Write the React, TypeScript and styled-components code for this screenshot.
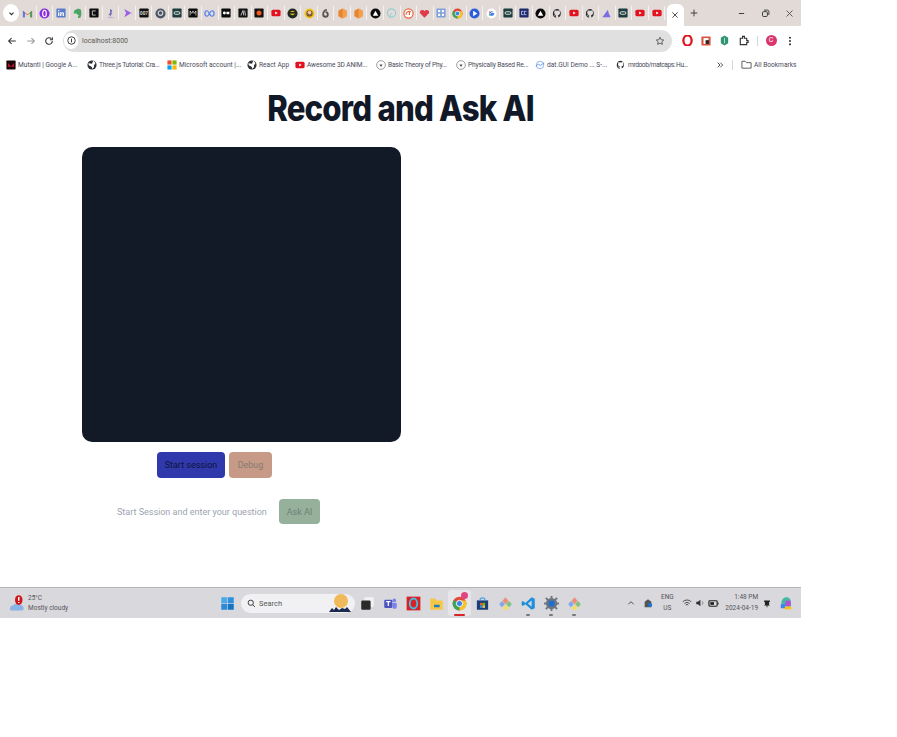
import React from "react";
import styled, { createGlobalStyle } from "styled-components";

const Global = createGlobalStyle`
  html, body { margin: 0; padding: 0; background: #fff; }
  body { font-family: Roboto, "Liberation Sans", sans-serif; }
`;

const Screen = styled.div`
  width: 801px;
  height: 618px;
  display: flex;
  flex-direction: column;
  overflow: hidden;
  background: #fff;
`;

const TabStrip = styled.div`
  height: 26px;
  background: #e1dad7;
  display: flex;
  align-items: center;
  padding-left: 3px;
`;
const TabMenu = styled.div`
  width: 16px;
  height: 18px;
  border-radius: 50%;
  background: #fff;
  display: flex;
  align-items: center;
  justify-content: center;
  margin-right: 1px;
  flex: none;
`;
const Tab = styled.div`
  width: 16.55px;
  height: 14px;
  display: flex;
  align-items: center;
  justify-content: center;
  border-right: 1px solid #f4f1f0;
  box-sizing: border-box;
  flex: none;
`;
const ActiveTab = styled.div`
  width: 17px;
  height: 22px;
  margin: 4px 0 0 1.5px;
  background: #fff;
  border-radius: 6px 6px 0 0;
  display: flex;
  align-items: center;
  justify-content: center;
  flex: none;
`;
const NewTab = styled.div`
  width: 20px;
  margin-left: 0.5px;
  display: flex;
  justify-content: center;
  flex: none;
`;
const WindowButtons = styled.div`
  margin-left: auto;
  display: flex;
  gap: 15px;
  padding-right: 7px;
  align-items: center;
`;

const Toolbar = styled.div`
  height: 29px;
  display: flex;
  align-items: center;
  padding-left: 7px;
  gap: 8.5px;
  background: #fff;
`;
const Omnibox = styled.div`
  width: 609px;
  height: 22px;
  border-radius: 11px;
  background: #e0e0e0;
  display: flex;
  align-items: center;
  margin-left: 0.5px;
  padding: 0 7px 0 1px;
  box-sizing: border-box;
  flex: none;
`;
const InfoBubble = styled.div`
  width: 14px;
  height: 16px;
  border-radius: 8px;
  background: #fff;
  display: flex;
  align-items: center;
  justify-content: center;
  margin-right: 4px;
`;
const Url = styled.span`
  font-size: 7px;
  color: #5f5a50;
  flex: 1;
`;
const ToolIcons = styled.div`
  display: flex;
  align-items: center;
  gap: 8px;
  margin-left: 1px;
`;
const Profile = styled.div`
  width: 11px;
  height: 11px;
  border-radius: 50%;
  background: #d9356f;
  color: #fff;
  font-size: 7px;
  line-height: 11px;
  text-align: center;
`;
const VSep = styled.div`
  width: 1px;
  height: 10px;
  background: #d8d8d8;
`;

const Bookmarks = styled.div`
  height: 19px;
  display: flex;
  align-items: center;
  padding-left: 6px;
  background: #fff;
`;
const Bookmark = styled.div<{ $w: number }>`
  display: flex;
  align-items: center;
  gap: 2px;
  width: ${(p) => p.$w}px;
  flex: none;
  svg {
    flex: none;
  }
`;
const BookmarkLabel = styled.span<{ $ls?: number }>`
  font-size: 6.6px;
  color: #4a4a5a;
  white-space: nowrap;
  letter-spacing: ${(p) => p.$ls || 0}px;
`;
const BookmarkEnd = styled.div`
  display: flex;
  align-items: center;
  gap: 8px;
  margin-left: 28px;
`;

const Main = styled.main`
  flex: 1;
  display: flex;
  flex-direction: column;
  background: #fff;
`;
const Title = styled.h1`
  margin: 14px 0 0;
  height: 40px;
  line-height: 40px;
  text-align: center;
  font-family: Inter, "Liberation Sans", sans-serif;
  font-size: 36px;
  font-weight: 800;
  letter-spacing: -0.9px;
  color: #111827;
  transform: scaleX(0.865);
`;
const Stage = styled.section`
  width: 319px;
  margin: 19px 0 0 82px;
  display: flex;
  flex-direction: column;
  align-items: flex-start;
`;
const Video = styled.div`
  width: 319px;
  height: 295px;
  border-radius: 10px;
  background: #131a27;
`;
const Controls = styled.div`
  display: flex;
  gap: 4px;
  margin: 10px 0 0 75px;
`;
const ActionButton = styled.button<{ $bg: string; $fg: string; $w: number; $h: number }>`
  width: ${(p) => p.$w}px;
  height: ${(p) => p.$h}px;
  padding: 0;
  border: 0;
  border-radius: 4px;
  background: ${(p) => p.$bg};
  color: ${(p) => p.$fg};
  font-family: Roboto, sans-serif;
  font-size: 9px;
`;
const AskRow = styled.div`
  display: flex;
  align-items: center;
  gap: 13px;
  margin: 21px 0 0 35px;
`;
const Prompt = styled.span`
  font-size: 9px;
  color: #9ca3af;
  white-space: nowrap;
  width: 149px;
`;

const Taskbar = styled.footer`
  height: 31px;
  box-sizing: border-box;
  border-top: 1px solid #b4b4b4;
  background: #d9d8dc;
  display: flex;
  align-items: center;
  color: #3a3a3a;
`;
const Weather = styled.div`
  width: 215.500px;
  padding-left: 9px;
  box-sizing: border-box;
  display: flex;
  align-items: center;
  gap: 1px;
  flex: none;
`;
const WeatherText = styled.div`
  font-size: 6.5px;
  line-height: 10px;
  color: #55555a;
`;
const SearchBox = styled.div`
  width: 114px;
  height: 19px;
  border-radius: 10px;
  background: #f1f1f3;
  display: flex;
  align-items: center;
  padding: 0 3px 0 6px;
  box-sizing: border-box;
  gap: 3px;
  font-size: 7.5px;
  color: #555;
  margin: 0 0.5px 0 2.5px;
  flex: none;
`;
const SearchLabel = styled.span`
  flex: 1;
`;
const Pinned = styled.div<{ $on?: boolean }>`
  position: relative;
  width: 23px;
  height: 26px;
  display: flex;
  align-items: center;
  justify-content: center;
  border-radius: 3px;
  background: ${(p) => (p.$on ? "#e6e5ea" : "transparent")};
  flex: none;
`;
const Marker = styled.i<{ $c: string; $w: number }>`
  position: absolute;
  bottom: 0;
  left: 50%;
  width: ${(p) => p.$w}px;
  height: 2px;
  margin-left: ${(p) => -p.$w / 2}px;
  border-radius: 1px;
  background: ${(p) => p.$c};
`;
const PinBadge = styled.i`
  position: absolute;
  top: 2px;
  right: 3px;
  width: 7px;
  height: 7px;
  border-radius: 50%;
  background: #e0457f;
`;
const TrayItem = styled.div<{ $ml: number }>`
  display: flex;
  align-items: center;
  margin-left: ${(p) => p.$ml}px;
  flex: none;
`;
const TrayText = styled.div<{ $align?: string }>`
  font-size: 6.5px;
  line-height: 11px;
  color: #55555a;
  text-align: ${(p) => p.$align || "center"};
`;

const S = ({ c, children, s = 11, v = 24 }: { c?: string; children: React.ReactNode; s?: number; v?: number }) => (
  <svg width={s} height={s} viewBox={`0 0 ${v} ${v}`} fill={c || "none"}>{children}</svg>
);

const Yt = ({ s = 10 }: { s?: number }) => (
  <S s={s}><rect x="1" y="4" width="22" height="16" rx="4" fill="#e3101e" /><path d="M10 8.500l6 3.500-6 3.500z" fill="#fff" /></S>
);
const Gh = ({ s = 11 }: { s?: number }) => (
  <S s={s}><path d="M12 2a10 10 0 0 0-3.200 19.500v-3.400c-2.800.6-3.400-1.300-3.400-1.300-.5-1.200-1.100-1.500-1.100-1.500-.9-.6.1-.6.1-.6 1 .1 1.500 1 1.500 1 .9 1.500 2.300 1.100 2.900.8.1-.6.3-1.100.6-1.300-2.200-.3-4.600-1.100-4.600-5 0-1.100.4-2 1-2.700-.1-.3-.4-1.300.1-2.700 0 0 .8-.3 2.800 1a9.500 9.500 0 0 1 5 0c1.900-1.300 2.800-1 2.800-1 .5 1.400.2 2.400.1 2.700.6.700 1 1.600 1 2.700 0 3.900-2.300 4.700-4.600 5 .4.300.7.900.7 1.900v3.400A10 10 0 0 0 12 2z" fill="#24292f" /></S>
);
const Globe = () => (
  <S s={10}><circle cx="12" cy="12" r="11" fill="#2a2f36" /><path d="M3 9c4-3 5 1 8 0s2-5 4-7c3 2 5 5 5 8-3 0-4 2-3 4 1 3-2 6-4 7-1-3-1-5-4-6-3 0-5-2-6-6z" fill="#fff" /></S>
);
const PageIcon = () => (
  <S s={10}><circle cx="12" cy="12" r="10.500" fill="#fff" stroke="#8a8a8a" strokeWidth="2" /><path d="M8 11h8l-4 6z" fill="#555" /></S>
);
const Hex = () => (
  <S s={11}><path d="M12 1l9 5v12l-9 5-9-5V6z" fill="#e9842c" /><path d="M12 1l9 5v12l-9 5z" fill="#f2a04d" /></S>
);
const Dark = ({ bg, children }: { bg: string; children?: React.ReactNode }) => (
  <S s={10}><rect x="1" y="1" width="22" height="22" rx="2" fill={bg} />{children}</S>
);
const Chrome = ({ s = 11 }: { s?: number }) => (
  <S s={s}><circle cx="12" cy="12" r="11" fill="#e04a3a" /><path d="M12 12L2.500 6.500A11 11 0 0 0 12 23z" fill="#38a853" /><path d="M12 12v11A11 11 0 0 0 22 7H12z" fill="#f7c325" /><circle cx="12" cy="12" r="5" fill="#3f83ea" stroke="#fff" strokeWidth="1.500" /></S>
);
const Figma = () => (
  <S s={15}>
    <path d="M12 2l5 6-5 5-5-5z" fill="#ef8d7a" /><path d="M6 8l5 5-5 5-4-5z" fill="#7ea7ee" />
    <path d="M18 8l4 5-4 5-5-5z" fill="#7bc47f" /><path d="M12 14l5 5-5 4-5-4z" fill="#f4dc6c" />
  </S>
);

const tabIcons: React.ReactNode[] = [
  <S><path d="M2 20V6l10 8 10-8v14h-4V11l-6 5-6-5v9z" fill="#ea4335" /><path d="M2 20V6l4 3v11z" fill="#4285f4" /><path d="M22 20V6l-4 3v11z" fill="#34a853" /></S>,
  <S><circle cx="12" cy="12" r="11" fill="#8a2be2" /><ellipse cx="12" cy="12" rx="4" ry="7" fill="none" stroke="#fff" strokeWidth="2.500" /></S>,
  <Dark bg="#5a7fc9"><path d="M5 10h3v9H5zM5 5h3v3H5zM10 10h3v1.500c2-2.500 6-2 6 2V19h-3v-5c0-2-3-2-3 0v5h-3z" fill="#fff" /></Dark>,
  <S><path d="M6 5l5-3c5-1 9 0 9 5 1 5 0 12-2 14-3 2-5 1-5-2 0-3 3-2 3-1 0-3-5-3-6-6H4c0-3 0-5 2-7z" fill="#4aa564" /></S>,
  <Dark bg="#0e0e0e"><path d="M16 7H8v10h8" fill="none" stroke="#ddd" strokeWidth="2" /></Dark>,
  <S><path d="M11 2l5 3-2 6 2 1-3 3v5l-2-4-4-1 4-4z" fill="#7b6fb7" /><path d="M5 20h14v2H5z" fill="#b9b4d6" /></S>,
  <S><path d="M5 2l15 9-15 9 4-9z" fill="#9b5de5" /><circle cx="20" cy="11" r="2" fill="#c9a5f2" /></S>,
  <Dark bg="#111"><text x="12" y="16" fontSize="11" fontWeight="700" textAnchor="middle" fill="#ddd">007</text></Dark>,
  <S><circle cx="12" cy="12" r="11" fill="#4b5563" /><circle cx="12" cy="11" r="5" fill="none" stroke="#d1d5db" strokeWidth="2.500" /></S>,
  <Dark bg="#1f3d3f"><rect x="5" y="9" width="14" height="6" rx="3" fill="none" stroke="#fff" strokeWidth="2" /></Dark>,
  <Dark bg="#0a0a0a"><path d="M5 18V7l4 6 3-6 3 6 4-6v11" fill="none" stroke="#ddd" strokeWidth="1.800" /></Dark>,
  <S><path d="M7 6c3 0 6 12 10 12s5-3 5-6-2-6-5-6-7 12-10 12-5-3-5-6 2-6 5-6z" fill="none" stroke="#4f7df0" strokeWidth="2.500" /></S>,
  <Dark bg="#0a0a0a"><circle cx="8" cy="12" r="3.500" fill="#fff" /><rect x="13" y="9" width="7" height="6" fill="#fff" /></Dark>,
  <Dark bg="#111"><path d="M7 18l5-12 2 12M16 6l2 12" fill="none" stroke="#ddd" strokeWidth="2" /></Dark>,
  <Dark bg="#111"><circle cx="12" cy="12" r="6" fill="#ee5a24" /></Dark>,
  <Yt />,
  <S><circle cx="12" cy="12" r="11" fill="#1f2a24" /><circle cx="12" cy="11" r="5" fill="#d9b51f" /><rect x="7" y="9" width="10" height="3" fill="#111" /></S>,
  <S><circle cx="12" cy="12" r="11" fill="#f5c518" /><circle cx="12" cy="12" r="7" fill="#7b5a3c" /><circle cx="12" cy="10" r="4" fill="#eec9a6" /></S>,
  <S><path d="M15 4c-6 0-8 6-8 10a5 5 0 1 0 5-5" fill="none" stroke="#555" strokeWidth="4" /></S>,
  <Hex />,
  <Hex />,
  <S><circle cx="12" cy="12" r="11" fill="#0a0a0a" /><path d="M12 6l6 11H6z" fill="#fff" /></S>,
  <S><circle cx="12" cy="11" r="9" fill="none" stroke="#8fd0d0" strokeWidth="2.500" /><path d="M8 21c0-6 2-6 4-10" fill="none" stroke="#8fd0d0" strokeWidth="2" /></S>,
  <S><circle cx="12" cy="12" r="10" fill="#fff" stroke="#e8643c" strokeWidth="2.500" /><path d="M7 15a6 6 0 0 1 10-6M14 8v7" fill="none" stroke="#e8643c" strokeWidth="2.500" /></S>,
  <S><path d="M12 21L2 11c-2-6 7-9 10-4 3-5 12-2 10 4z" fill="#e0394a" /></S>,
  <Dark bg="#7f9fdc"><path d="M5 5h5v5H5zM14 5h5v5h-5zM5 14h5v5H5zM14 14h5v5h-5z" fill="#fff" /></Dark>,
  <Chrome />,
  <S><circle cx="12" cy="12" r="11" fill="#2b5fd9" /><path d="M9 6l9 6-9 6z" fill="#fff" /></S>,
  <S><circle cx="12" cy="12" r="11" fill="#fff" /><path d="M18 12h-6v2h4a4 4 0 1 1-1-5" fill="none" stroke="#4285f4" strokeWidth="2.500" /><path d="M7 8l3 2" stroke="#ea4335" strokeWidth="2.500" /><path d="M7 16l3-2" stroke="#34a853" strokeWidth="2.500" /></S>,
  <Dark bg="#1f3d3f"><rect x="5" y="9" width="14" height="6" rx="3" fill="none" stroke="#fff" strokeWidth="2" /></Dark>,
  <Dark bg="#1f2a6b"><path d="M11 8H6v8h5M18 8h-5v8h5" fill="none" stroke="#c7cff0" strokeWidth="2" /></Dark>,
  <S><circle cx="12" cy="12" r="11" fill="#0a0a0a" /><path d="M12 6l6 11H6z" fill="#fff" /></S>,
  <Gh />,
  <Yt />,
  <Gh />,
  <S><path d="M3 20L15 4l2 8 4 8z" fill="#7a6be6" /></S>,
  <Dark bg="#1f3d3f"><rect x="5" y="9" width="14" height="6" rx="3" fill="none" stroke="#fff" strokeWidth="2" /></Dark>,
  <Yt />,
  <Yt />,
];

const marks: { w: number; label: string; ls?: number; icon: React.ReactNode }[] = [
  { w: 81, label: "Mutanti | Google A...", icon: <Dark bg="#1a0508"><path d="M5 7l7 9 7-9v9H5z" fill="#d3132c" /></Dark> },
  { w: 80, label: "Three.js Tutorial: Cra...", ls: -0.2, icon: <Globe /> },
  { w: 80, label: "Microsoft account |...", icon: <S s={10}><path d="M1 1h10v10H1z" fill="#f25022" /><path d="M13 1h10v10H13z" fill="#7fba00" /><path d="M1 13h10v10H1z" fill="#00a4ef" /><path d="M13 13h10v10H13z" fill="#ffb900" /></S> },
  { w: 48, label: "React App", icon: <Globe /> },
  { w: 81, label: "Awesome 3D ANIM...", ls: -0.1, icon: <Yt /> },
  { w: 80, label: "Basic Theory of Phy...", ls: -0.2, icon: <PageIcon /> },
  { w: 79, label: "Physically Based Re...", ls: -0.15, icon: <PageIcon /> },
  { w: 81, label: "dat.GUI Demo ... S-...", icon: <S s={10}><circle cx="12" cy="12" r="9" fill="none" stroke="#7ea7ee" strokeWidth="2" /><path d="M2 15l6-5 5 3 9-6" fill="none" stroke="#4f86e8" strokeWidth="2" /></S> },
  { w: 72, label: "mrdoob/matcaps: Hu...", ls: -0.4, icon: <Gh s={10} /> },
];

const Close = ({ s = 8, c = "#333" }: { s?: number; c?: string }) => (
  <S s={s}><path d="M4 4l16 16M20 4L4 20" stroke={c} strokeWidth="2.500" /></S>
);

export default function App() {
  return (
    <>
      <Global />
      <Screen>
        <TabStrip>
          <TabMenu><S s={7}><path d="M5 9l7 7 7-7" fill="none" stroke="#333" strokeWidth="4" /></S></TabMenu>
          {tabIcons.map((icon, i) => <Tab key={i}>{icon}</Tab>)}
          <ActiveTab><Close /></ActiveTab>
          <NewTab><S s={8}><path d="M12 2v20M2 12h20" stroke="#444" strokeWidth="3" /></S></NewTab>
          <WindowButtons>
            <S s={9}><path d="M5 12h14" stroke="#333" strokeWidth="2.500" /></S>
            <S s={9}><rect x="4" y="7" width="13" height="13" rx="3" fill="none" stroke="#333" strokeWidth="2.500" /><path d="M8 3h9a4 4 0 0 1 4 4v9" fill="none" stroke="#333" strokeWidth="2.500" /></S>
            <Close s={9} c="#555" />
          </WindowButtons>
        </TabStrip>

        <Toolbar>
          <S s={10}><path d="M21 12H4M11 5l-7 7 7 7" fill="none" stroke="#333" strokeWidth="2.500" /></S>
          <S s={10}><path d="M3 12h17M13 5l7 7-7 7" fill="none" stroke="#999" strokeWidth="2.500" /></S>
          <S s={10}><path d="M20 12a8 8 0 1 1-2.500-5.800M20 3v6h-6" fill="none" stroke="#333" strokeWidth="2.500" /></S>
          <Omnibox>
            <InfoBubble><S s={9}><circle cx="12" cy="12" r="10" fill="none" stroke="#333" strokeWidth="2.500" /><path d="M12 7v10" stroke="#333" strokeWidth="2.500" /></S></InfoBubble>
            <Url>localhost:8000</Url>
            <S s={10}><path d="M12 3l2.800 6 6.200.7-4.600 4.200 1.300 6.300L12 17l-5.700 3.200 1.300-6.300L3 9.700 9.200 9z" fill="none" stroke="#555" strokeWidth="2.200" /></S>
          </Omnibox>
          <ToolIcons>
            <S s={11}><ellipse cx="12" cy="12" rx="9" ry="11" fill="none" stroke="#e0141e" strokeWidth="5" /></S>
            <Dark bg="#d9533f"><rect x="6" y="5" width="12" height="14" fill="#fff" /><path d="M11 10h8v9h-8z" fill="#222" /></Dark>
            <S s={11}><path d="M12 1l8 5v12l-8 5-8-5V6z" fill="#2f9472" /><path d="M12 6v12" stroke="#bfe5d6" strokeWidth="2" /></S>
            <S s={11}><path d="M5 7h5V3h4v4h5v5h3v4h-3v5H5z" fill="none" stroke="#333" strokeWidth="2.500" /></S>
            <VSep />
            <Profile>C</Profile>
            <S s={10}><circle cx="12" cy="4" r="2.500" fill="#333" /><circle cx="12" cy="12" r="2.500" fill="#333" /><circle cx="12" cy="20" r="2.500" fill="#333" /></S>
          </ToolIcons>
        </Toolbar>

        <Bookmarks>
          {marks.map((m) => (
            <Bookmark key={m.label} $w={m.w}>
              {m.icon}
              <BookmarkLabel $ls={m.ls}>{m.label}</BookmarkLabel>
            </Bookmark>
          ))}
          <BookmarkEnd>
            <S s={8}><path d="M5 5l7 7-7 7M13 5l7 7-7 7" fill="none" stroke="#333" strokeWidth="2.500" /></S>
            <VSep />
            <Bookmark $w={53}>
              <S s={11}><path d="M2 5h7l3 3h10v12H2z" fill="none" stroke="#555" strokeWidth="2" /></S>
              <BookmarkLabel>All Bookmarks</BookmarkLabel>
            </Bookmark>
          </BookmarkEnd>
        </Bookmarks>

        <Main>
          <Title>Record and Ask AI</Title>
          <Stage>
            <Video />
            <Controls>
              <ActionButton $bg="#2f39ab" $fg="#10143a" $w={68} $h={26}>Start session</ActionButton>
              <ActionButton $bg="#c69a87" $fg="#857a75" $w={43} $h={26}>Debug</ActionButton>
            </Controls>
            <AskRow>
              <Prompt>Start Session and enter your question</Prompt>
              <ActionButton $bg="#95b09b" $fg="#6f8276" $w={41} $h={25}>Ask AI</ActionButton>
            </AskRow>
          </Stage>
        </Main>

        <Taskbar>
          <Weather>
            <S s={18}><path d="M2 22c-2-4 1-7 4-7 2-3 8-4 10 0 4 0 5 7 1 7z" fill="#8ab4e8" /><ellipse cx="13" cy="8" rx="5" ry="6.500" fill="#d0161b" /><path d="M13 4v5M13 10.500v1.500" stroke="#fff" strokeWidth="2" /></S>
            <WeatherText>25°C<br />Mostly cloudy</WeatherText>
          </Weather>
          <Pinned><S s={15}><path d="M2 2h9.500v9.500H2z" fill="#4aa8e8" /><path d="M12.500 2H22v9.500h-9.500z" fill="#2e90dc" /><path d="M2 12.500h9.500V22H2z" fill="#2a8ad8" /><path d="M12.500 12.500H22V22h-9.500z" fill="#1673c4" /></S></Pinned>
          <SearchBox>
            <S s={9}><circle cx="10" cy="10" r="7" fill="none" stroke="#333" strokeWidth="2.500" /><path d="M15 15l6 6" stroke="#333" strokeWidth="2.500" /></S>
            <SearchLabel>Search</SearchLabel>
            <S s={24}><circle cx="13" cy="10" r="7" fill="#f0b95a" /><path d="M1 21l3-4 2 2 2-3 3 3 3-2 3 1 2-2 4 5z" fill="#1c2a52" /></S>
          </SearchBox>
          <Pinned><S s={15}><rect x="7" y="2" width="15" height="15" rx="2" fill="#f2f2f2" /><rect x="2" y="7" width="15" height="15" rx="2" fill="#2a2a2a" /></S></Pinned>
          <Pinned><S s={15}><rect x="2" y="6" width="13" height="13" rx="2" fill="#4b53bc" /><circle cx="18" cy="7" r="3" fill="#7b83eb" /><path d="M15 11h7v6a3 3 0 0 1-7 0z" fill="#7b83eb" /><path d="M5 9h7M8.500 9v7" stroke="#fff" strokeWidth="2" /></S></Pinned>
          <Pinned><S s={15}><rect x="1" y="1" width="22" height="22" fill="#d92027" /><ellipse cx="12" cy="12" rx="6" ry="8" fill="none" stroke="#3fc1e0" strokeWidth="3" /></S></Pinned>
          <Pinned><S s={15}><path d="M2 4h8l2 3h10v15H2z" fill="#f6c644" /><rect x="8" y="14" width="9" height="4" fill="#1b7fc4" /></S></Pinned>
          <Pinned $on><Chrome s={15} /><PinBadge /><Marker $c="#d9242c" $w={11} /></Pinned>
          <Pinned><S s={15}><path d="M3 7h18v15H3z" fill="#1a3f78" /><path d="M8 7a4 4 0 0 1 8 0" fill="none" stroke="#4aa8e8" strokeWidth="2" /><path d="M8 11h4v4H8z" fill="#ea5a2c" /><path d="M12 11h4v4h-4z" fill="#7fba00" /><path d="M8 15h4v4H8z" fill="#2e90dc" /><path d="M12 15h4v4h-4z" fill="#f6c644" /></S></Pinned>
          <Pinned><Figma /></Pinned>
          <Pinned><S s={15}><path d="M17 2l5 2.500v15L17 22 7 13l-4 3-2-1.500V9.500L3 8l4 3zM17 7l-6 5 6 5z" fill="#1e8fdc" /></S><Marker $c="#777" $w={4} /></Pinned>
          <Pinned><S s={15}><circle cx="12" cy="12" r="9" fill="#6c7680" /><path d="M12 0v24M0 12h24M3 3l18 18M21 3L3 21" stroke="#6c7680" strokeWidth="3" /><rect x="7.500" y="7.500" width="9" height="9" rx="2" fill="#1f6fd0" /></S><Marker $c="#777" $w={4} /></Pinned>
          <Pinned><Figma /><Marker $c="#777" $w={4} /></Pinned>
          <TrayItem $ml={41.5}><S s={8}><path d="M4 16l8-8 8 8" fill="none" stroke="#333" strokeWidth="2.500" /></S></TrayItem>
          <TrayItem $ml={8}><S s={10}><path d="M4 22V9l8-6 8 6v13z" fill="#555" /><circle cx="17" cy="17" r="5" fill="#1f6fd0" /></S></TrayItem>
          <TrayItem $ml={8}><TrayText>ENG<br />US</TrayText></TrayItem>
          <TrayItem $ml={8}><S s={10}><path d="M2 9a14 14 0 0 1 20 0M6 13a9 9 0 0 1 12 0M9 17a4 4 0 0 1 6 0" fill="none" stroke="#333" strokeWidth="2" /></S></TrayItem>
          <TrayItem $ml={3.5}><S s={10}><path d="M3 9h4l6-5v16l-6-5H3z" fill="#333" /><path d="M17 8a5 5 0 0 1 0 8" fill="none" stroke="#777" strokeWidth="2" /></S></TrayItem>
          <TrayItem $ml={2.5}><S s={11}><rect x="2" y="6" width="18" height="12" rx="2" fill="none" stroke="#222" strokeWidth="2.500" /><rect x="5" y="9" width="8" height="6" fill="#222" /><rect x="21" y="10" width="2" height="4" fill="#222" /></S></TrayItem>
          <TrayItem $ml={6.5}><TrayText $align="right">1:48 PM<br />2024-04-19</TrayText></TrayItem>
          <TrayItem $ml={4}><S s={10}><path d="M5 6h14v3l-2 1v6l2 2H5l2-2v-6L5 9zM11 18h2v4h-2z" fill="#222" /></S></TrayItem>
          <TrayItem $ml={7}><S s={14}><path d="M4 12c0-6 4-10 9-10 5 0 7 4 7 8v8H8c-3 0-4-3-4-6z" fill="#44b9a4" /><path d="M11 8h9v10h-9z" fill="#b14fd6" /><path d="M3 14h8v7H3z" fill="#3f83ea" /><rect x="10" y="18" width="11" height="5" fill="#f5c518" /></S></TrayItem>
        </Taskbar>
      </Screen>
    </>
  );
}
